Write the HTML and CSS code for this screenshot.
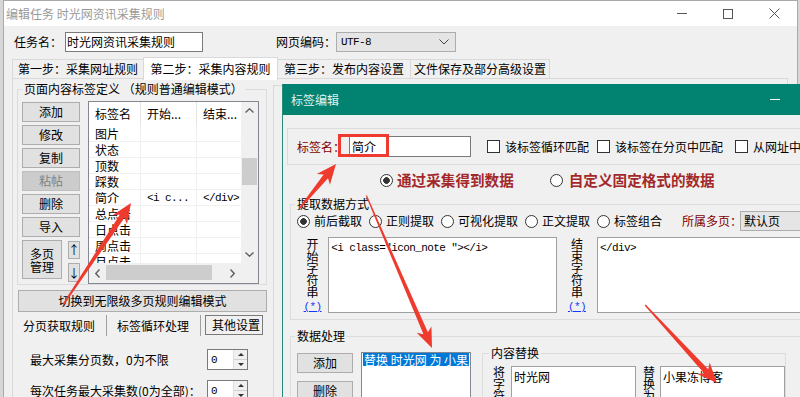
FILE: index.html
```html
<!DOCTYPE html>
<html lang="zh-CN">
<head>
    <meta charset="UTF-8">
    <meta name="viewport" content="width=device-width, initial-scale=1.0">
    <title>编辑任务 时光网资讯采集规则</title>
    <link rel="stylesheet" href="styles.css">
</head>
<body>
    <!-- Main window -->
    <div class="main-win">
        <div class="titlebar">
            <span class="title">编辑任务 时光网资讯采集规则</span>
            <div class="win-ctrls">
                <span class="wc"><i class="ic-min"></i></span>
                <span class="wc"><i class="ic-max"></i></span>
                <span class="wc"><svg width="11" height="11" viewBox="0 0 11 11"><path d="M0.5 0.5L10.5 10.5M10.5 0.5L0.5 10.5" stroke="#555" stroke-width="1"/></svg></span>
            </div>
        </div>

        <div class="task-row">
            <span class="task-lbl">任务名：</span>
            <div class="txt-input task-name">时光网资讯采集规则</div>
            <span class="enc-lbl">网页编码：</span>
            <div class="combo enc">
                <span class="mono">UTF-8</span>
                <svg class="chev" width="10" height="6" viewBox="0 0 10 6"><polyline points="0.5,0.5 5,5 9.5,0.5" fill="none" stroke="#444"/></svg>
            </div>
        </div>

        <div class="tabs">
            <div class="tab t1">第一步：采集网址规则</div>
            <div class="tab t2 on">第二步：采集内容规则</div>
            <div class="tab t3">第三步：发布内容设置</div>
            <div class="tab t4">文件保存及部分高级设置</div>
        </div>

        <div class="tab-panel">
            <div class="left-pane">
                <fieldset class="group tag-def">
                    <legend>页面内容标签定义 （规则普通编辑模式）</legend>
                    <div class="tag-def-body">
                        <div class="btn-col">
                            <button class="btn">添加</button>
                            <button class="btn">修改</button>
                            <button class="btn">复制</button>
                            <button class="btn" disabled>粘帖</button>
                            <button class="btn">删除</button>
                            <button class="btn">导入</button>
                            <div class="multi-row">
                                <button class="btn multi">多页<br>管理</button>
                                <div class="updown">
                                    <button class="btn up">↑</button>
                                    <button class="btn down">↓</button>
                                </div>
                            </div>
                        </div>

                        <div class="listview">
                            <div class="lv-main">
                                <div class="lv-content">
                                    <div class="lv-head"><span class="c1">标签名</span><span class="c2">开始...</span><span class="c3">结束...</span></div>
                                    <div class="lv-row"><span class="c1">图片</span><span class="c2"></span><span class="c3"></span></div>
                                    <div class="lv-row"><span class="c1">状态</span><span class="c2"></span><span class="c3"></span></div>
                                    <div class="lv-row"><span class="c1">顶数</span><span class="c2"></span><span class="c3"></span></div>
                                    <div class="lv-row"><span class="c1">踩数</span><span class="c2"></span><span class="c3"></span></div>
                                    <div class="lv-row"><span class="c1">简介</span><span class="c2 mono">&lt;i c...</span><span class="c3 mono">&lt;/div&gt;</span></div>
                                    <div class="lv-row"><span class="c1">总点击</span><span class="c2"></span><span class="c3"></span></div>
                                    <div class="lv-row"><span class="c1">日点击</span><span class="c2"></span><span class="c3"></span></div>
                                    <div class="lv-row"><span class="c1">周点击</span><span class="c2"></span><span class="c3"></span></div>
                                    <div class="lv-row"><span class="c1">月点击</span><span class="c2"></span><span class="c3"></span></div>
                                </div>
                                <div class="vscroll">
                                    <span class="sb-btn"><svg width="9" height="5" viewBox="0 0 9 5"><polyline points="0.5,4.5 4.5,0.8 8.5,4.5" fill="none" stroke="#606060" stroke-width="1.4"/></svg></span>
                                    <span class="sb-track"><i class="thumb-v"></i></span>
                                    <span class="sb-btn"><svg width="9" height="5" viewBox="0 0 9 5"><polyline points="0.5,0.5 4.5,4.2 8.5,0.5" fill="none" stroke="#606060" stroke-width="1.4"/></svg></span>
                                </div>
                            </div>
                            <div class="hscroll-row">
                                <div class="hscroll">
                                    <span class="sb-btn h"><svg width="5" height="9" viewBox="0 0 5 9"><polyline points="4.5,0.5 0.8,4.5 4.5,8.5" fill="none" stroke="#606060" stroke-width="1.4"/></svg></span>
                                    <span class="sb-track h"><i class="thumb-h"></i></span>
                                    <span class="sb-btn h"><svg width="5" height="9" viewBox="0 0 5 9"><polyline points="0.5,0.5 4.2,4.5 0.5,8.5" fill="none" stroke="#606060" stroke-width="1.4"/></svg></span>
                                </div>
                                <div class="corner"></div>
                            </div>
                        </div>
                    </div>
                </fieldset>

                <button class="btn switch-btn">切换到无限级多页规则编辑模式</button>

                <div class="subtabs">
                    <div class="subtab st1">分页获取规则</div>
                    <div class="subtab st2">标签循环处理</div>
                    <div class="subtab st3 on">其他设置</div>
                </div>

                <div class="opt-row">
                    <span class="opt-lbl">最大采集分页数，0为不限</span>
                    <div class="spin"><span class="mono val">0</span><div class="spin-btns"><i class="up"></i><i class="dn"></i></div></div>
                </div>
                <div class="opt-row second">
                    <span class="opt-lbl">每次任务最大采集数(0为全部)：</span>
                    <div class="spin"><span class="mono val">0</span><div class="spin-btns"><i class="up"></i><i class="dn"></i></div></div>
                </div>
            </div>
            <div class="right-pane"></div>
        </div>
    </div>

    <!-- Tag edit dialog, on top of the main window -->
    <div class="dlg">
        <div class="dlg-title">
            <span>标签编辑</span>
            <div class="win-ctrls">
                <span class="wc"><i class="ic-min light"></i></span>
                <span class="wc"><i class="ic-max light"></i></span>
                <span class="wc"></span>
            </div>
        </div>
        <div class="dlg-body">
            <div class="name-box">
                <span class="red-lbl name-lbl">标签名：</span>
                <div class="name-field">
                    <div class="txt-input name-input">简介</div>
                    <span class="mark-box"></span>
                </div>
                <span class="chk c-loop"><i class="cb"></i>该标签循环匹配</span>
                <span class="chk c-page"><i class="cb"></i>该标签在分页中匹配</span>
                <span class="chk c-url"><i class="cb"></i>从网址中获取</span>
            </div>

            <div class="source-row">
                <span class="src"><i class="radio on"></i><b>通过采集得到数据</b></span>
                <span class="src custom"><i class="radio"></i><b>自定义固定格式的数据</b></span>
            </div>

            <fieldset class="group extract">
                <legend>提取数据方式</legend>
                <div class="method-row">
                    <span class="rb"><i class="radio on"></i>前后截取</span>
                    <span class="rb"><i class="radio"></i>正则提取</span>
                    <span class="rb"><i class="radio"></i>可视化提取</span>
                    <span class="rb"><i class="radio"></i>正文提取</span>
                    <span class="rb"><i class="radio"></i>标签组合</span>
                    <span class="red-lbl page-lbl">所属多页：</span>
                    <div class="combo page-sel">默认页</div>
                </div>
                <div class="str-row">
                    <div class="vlabel first"><span class="vtext">开始字符串</span><a class="star mono">(*)</a></div>
                    <div class="txt-area start mono">&lt;i class="icon_note "&gt;&lt;/i&gt;</div>
                    <div class="vlabel second"><span class="vtext">结束字符串</span><a class="star mono">(*)</a></div>
                    <div class="txt-area end mono">&lt;/div&gt;</div>
                </div>
            </fieldset>

            <fieldset class="group process">
                <legend>数据处理</legend>
                <div class="process-row">
                    <div class="proc-btns">
                        <button class="btn">添加</button>
                        <button class="btn">删除</button>
                    </div>
                    <div class="proc-list"><div class="sel-item">替换 时光网 为 小果冻博客</div></div>
                    <fieldset class="group replace">
                        <legend>内容替换</legend>
                        <div class="replace-row">
                            <span class="vtext from-lbl">将字符串</span>
                            <div class="txt-area r-from">时光网</div>
                            <span class="vtext to-lbl">替换为</span>
                            <div class="txt-area r-to">小果冻博客</div>
                        </div>
                    </fieldset>
                </div>
            </fieldset>
        </div>
    </div>

    <!-- annotation arrows -->
    <svg class="arrows" width="800" height="397" viewBox="0 0 800 397">
        <g fill="#ef3a2e">
            <polygon transform="translate(131 203) rotate(-56.3)" points="0,0 -20,-8.5 -16,-2.8 -122,-0.8 -122,0.8 -16,2.8 -20,8.5"/>
            <polygon transform="translate(336 164) rotate(-50.7)" points="0,0 -20,-8.5 -16,-2.8 -57,-0.8 -57,0.8 -16,2.8 -20,8.5"/>
            <polygon transform="translate(432 348) rotate(66.7)" points="0,0 -20,-8 -16,-2.4 -166,-0.6 -166,0.6 -16,2.4 -20,8"/>
            <polygon transform="translate(717 383) rotate(47.3)" points="0,0 -20,-8.5 -16,-2.8 -106,-0.7 -106,0.7 -16,2.8 -20,8.5"/>
        </g>
    </svg>
</body>
</html>
```

FILE: styles.css
```css
* {
    box-sizing: border-box;
}

body {
    margin: 0;
    width: 800px;
    height: 397px;
    overflow: hidden;
    position: relative;
    background: #d6d6d6;
    font-family: "Noto Sans CJK SC", sans-serif;
    font-size: 12px;
    line-height: 14px;
    color: #000;
}

.mono {
    font-family: "Liberation Mono", monospace;
    font-size: 11px;
    letter-spacing: -0.6px;
}

button {
    font: inherit;
    color: inherit;
    margin: 0;
    padding: 0;
}

.btn {
    display: flex;
    align-items: center;
    justify-content: center;
    background: #e1e1e1;
    border: 1px solid #adadad;
}

.btn:disabled {
    background: #cccccc;
    border-color: #bfbfbf;
    color: #808080;
}

.group {
    margin: 0;
    min-width: 0;
    border: 1px solid #dcdcdc;
}

.group legend {
    padding: 0 2px;
    line-height: 14px;
}

.txt-input {
    display: flex;
    align-items: center;
    background: #fff;
    border: 1px solid #7a7a7a;
    padding: 0 1px;
    white-space: nowrap;
}

.combo {
    display: flex;
    align-items: center;
    background: #e5e5e5;
    border: 1px solid #adadad;
    padding-left: 4px;
}

.red-lbl {
    color: #800000;
}

/* ---------- main window ---------- */
.main-win {
    margin-left: 3px;
    width: 795px;
    height: 397px;
    background: #f0f0f0;
    border: 1px solid #aaaaaa;
    border-bottom: none;
}

.titlebar {
    height: 25px;
    display: flex;
    align-items: center;
    background: #fff;
}

.titlebar .title {
    padding-left: 2px;
    color: #9a9a9a;
}

.win-ctrls {
    display: flex;
    height: 100%;
    margin-left: auto;
}

.wc {
    width: 46px;
    display: flex;
    align-items: center;
    justify-content: center;
}

.ic-min {
    width: 10px;
    height: 1px;
    background: #555;
}

.ic-max {
    width: 10px;
    height: 10px;
    border: 1px solid #555;
}

.ic-min.light {
    background: #fff;
}

.ic-max.light {
    border-color: #fff;
}

.task-row {
    display: flex;
    align-items: center;
    height: 20px;
    margin-top: 6px;
    padding-left: 10px;
}

.task-lbl {
    width: 51px;
}

.task-name {
    width: 138px;
    height: 20px;
}

.enc-lbl {
    margin-left: 73px;
    width: 60px;
}

.enc {
    width: 120px;
    height: 20px;
}

.enc .chev {
    margin-left: auto;
    margin-right: 6px;
}

.tabs {
    display: flex;
    align-items: flex-end;
    height: 21px;
    margin: 5px 0 0 8px;
    position: relative;
    z-index: 1;
}

.tab {
    height: 19px;
    display: flex;
    align-items: center;
    justify-content: center;
    background: #f0f0f0;
    border: 1px solid #d9d9d9;
    border-bottom: none;
    margin-right: -1px;
}

.tab.on {
    height: 23px;
    margin-bottom: -2px;
    background: #fff;
}

.t1 { width: 132px; }
.t2 { width: 135px; }
.t3 { width: 134px; }
.t4 { width: 140px; }

.tab-panel {
    display: flex;
    height: 330px;
    margin: 0 9px 0 8px;
    padding: 3px 0 0 4px;
    border: 1px solid #d9d9d9;
}

.left-pane {
    width: 250px;
}

.right-pane {
    margin: 3px 0 0 6px;
    flex: 1;
    border-left: 1px solid #d9d9d9;
    border-top: 1px solid #d9d9d9;
}

.tag-def {
    padding: 6px 4px 0;
}

.tag-def-body {
    display: flex;
    align-items: flex-start;
}

.btn-col {
    width: 58px;
}

.btn-col > .btn {
    width: 58px;
    height: 20px;
    margin-bottom: 3px;
}

.multi-row {
    display: flex;
    margin-top: 1px;
}

.multi {
    width: 40px;
    height: 39px;
    line-height: 13px;
}

.updown {
    display: flex;
    flex-direction: column;
    margin-left: 6px;
}

.updown .btn {
    width: 12px;
}

.updown .up {
    height: 18px;
    margin-top: 1px;
}

.updown .down {
    height: 19px;
    margin-top: 4px;
}

.listview {
    width: 171px;
    height: 183px;
    margin: -1px 0 0 8px;
    border: 1px solid #828790;
    background: #fff;
    display: flex;
    flex-direction: column;
}

.lv-main {
    display: flex;
    flex: 1;
    min-height: 0;
}

.lv-content {
    flex: 1;
    overflow: hidden;
}

.lv-head,
.lv-row {
    display: flex;
    white-space: nowrap;
}

.lv-head {
    height: 24px;
}

.lv-row {
    height: 16px;
}

.lv-head span,
.lv-row span {
    display: flex;
    align-items: center;
    flex: none;
    padding-left: 6px;
    border-right: 1px solid #e5e5e5;
    overflow: hidden;
}

.lv-row span {
    border-right-color: #f0f0f0;
    border-bottom: 1px solid #f0f0f0;
}

.c1 { width: 52px; }
.c2 { width: 56px; }
.c3 { width: 60px; }

.vscroll {
    width: 17px;
    display: flex;
    flex-direction: column;
    background: #f0f0f0;
}

.sb-btn {
    height: 17px;
    display: flex;
    align-items: center;
    justify-content: center;
    flex: none;
}

.sb-track {
    flex: 1;
}

.thumb-v {
    display: block;
    width: 15px;
    height: 27px;
    margin: 39px 0 0 1px;
    background: #cdcdcd;
}

.hscroll-row {
    display: flex;
    height: 20px;
}

.hscroll {
    flex: 1;
    display: flex;
    background: #f0f0f0;
}

.sb-btn.h {
    width: 17px;
    height: 100%;
}

.thumb-h {
    display: block;
    width: 106px;
    height: 15px;
    margin: 2px 0 0 0;
    background: #cdcdcd;
}

.corner {
    width: 17px;
    background: #f0f0f0;
}

.switch-btn {
    width: 249px;
    height: 22px;
    margin: 5px 0 0 1px;
}

.subtabs {
    display: flex;
    height: 23px;
    margin-top: 1px;
}

.subtab {
    display: flex;
    align-items: center;
    height: 21px;
    margin-top: 2px;
    border-right: 1px solid #a0a0a0;
}

.st1 {
    width: 90px;
    padding-left: 6px;
}

.st2 {
    width: 94px;
    padding-left: 10px;
}

.st3.on {
    width: 58px;
    height: 20px;
    margin-left: 4px;
    padding-left: 6px;
    border: 1px solid #7a7a7a;
}

.opt-row {
    display: flex;
    align-items: center;
    height: 21px;
    margin-top: 13px;
    padding-left: 13px;
}

.opt-row.second {
    margin-top: 10px;
}

.opt-lbl {
    width: 177px;
    white-space: nowrap;
}

.spin {
    display: flex;
    width: 41px;
    height: 21px;
    background: #fff;
    border: 1px solid #7a7a7a;
}

.spin .val {
    flex: 1;
    padding: 3px 0 0 3px;
}

.spin-btns {
    width: 14px;
    display: flex;
    flex-direction: column;
    background: #f0f0f0;
    border-left: 1px solid #e0e0e0;
}

.spin-btns i {
    flex: 1;
    display: flex;
    align-items: center;
    justify-content: center;
}

.spin-btns .up {
    border-bottom: 1px solid #d0d0d0;
}

.spin-btns .up::after {
    content: "";
    border: 3px solid transparent;
    border-top: 0;
    border-bottom: 3px solid #333;
}

.spin-btns .dn::after {
    content: "";
    border: 3px solid transparent;
    border-bottom: 0;
    border-top: 3px solid #333;
}

/* ---------- tag edit dialog ---------- */
.dlg {
    position: absolute;
    left: 282px;
    top: 84px;
    width: 608px;
    height: 320px;
    background: #f0f0f0;
    border-left: 1px solid #2a8a7c;
}

.dlg-title {
    height: 31px;
    display: flex;
    align-items: center;
    padding-left: 8px;
    background: #028270;
    color: #e4f1ee;
}

.dlg-body {
    padding: 13px 0 0 4px;
}

.name-box {
    display: flex;
    align-items: center;
    height: 37px;
    padding-left: 9px;
    border: 1px solid #dcdcdc;
    white-space: nowrap;
}

.name-lbl {
    width: 52px;
}

.name-field {
    position: relative;
}

.name-input {
    width: 122px;
    height: 21px;
    padding-left: 2px;
}

.mark-box {
    position: absolute;
    left: -11px;
    top: -2px;
    width: 51px;
    height: 23px;
    border: 3px solid #ee3a2f;
}

.chk {
    display: flex;
    align-items: center;
}

.cb {
    width: 13px;
    height: 13px;
    margin-right: 5px;
    background: #fff;
    border: 1px solid #333;
}

.c-loop { margin-left: 16px; }
.c-page { margin-left: 8px; }
.c-url { margin-left: 12px; }

.radio {
    display: inline-block;
    flex: none;
    width: 13px;
    height: 13px;
    border: 1px solid #333;
    border-radius: 50%;
    background: #fff;
}

.radio.on {
    background: radial-gradient(circle, #333 0 3px, #fff 3.6px);
}

.source-row {
    display: flex;
    align-items: center;
    height: 20px;
    margin: 5px 0 7px;
    padding-left: 93px;
}

.src {
    display: flex;
    align-items: center;
    gap: 4px;
}

.src b {
    font-size: 14.6px;
    font-weight: bold;
    color: #a3282a;
}

.src.custom {
    margin-left: 36px;
    gap: 6px;
}

.extract {
    margin-left: 3px;
    padding: 0 0 6px 6px;
}

.extract legend,
.process legend {
    margin-left: -2px;
}

.method-row {
    display: flex;
    align-items: center;
    gap: 7px;
    height: 20px;
    white-space: nowrap;
}

.rb {
    display: flex;
    align-items: center;
    gap: 4px;
}

.page-lbl {
    margin-left: 13px;
    width: 58px;
}

.page-sel {
    width: 100px;
    height: 20px;
    margin-left: -7px;
    padding-left: 3px;
}

.str-row {
    display: flex;
    margin-top: 6px;
}

.vlabel {
    display: flex;
    flex-direction: column;
    align-items: center;
    padding-top: 1px;
}

.vlabel.first {
    width: 32px;
}

.vlabel.second {
    width: 41px;
}

.vtext {
    width: 12px;
    line-height: 12px;
    word-break: break-all;
}

.star {
    margin-top: 3px;
    line-height: 12px;
    color: #1437ff;
    text-decoration: underline;
}

.txt-area {
    background: #fff;
    border: 1px solid #a0a0a0;
    padding: 3px 2px;
    white-space: nowrap;
    overflow: hidden;
}

.txt-area.start {
    width: 235px;
    height: 76px;
}

.txt-area.end {
    width: 300px;
    height: 76px;
}

.process {
    margin: 9px 0 0 3px;
    padding: 0 0 0 6px;
    height: 80px;
}

.process-row {
    display: flex;
    align-items: flex-start;
}

.proc-btns {
    margin-top: 10px;
}

.proc-btns .btn {
    width: 56px;
    height: 20px;
    margin-bottom: 8px;
}

.proc-list {
    width: 110px;
    height: 60px;
    margin: 9px 0 0 8px;
    padding: 0 1px;
    background: #fff;
    border: 1px solid #828790;
    overflow: hidden;
}

.sel-item {
    height: 13px;
    line-height: 13px;
    padding-left: 1px;
    white-space: nowrap;
    background: #0078d7;
    color: #fff;
}

.replace {
    margin: 3px 0 0 11px;
    padding: 6px 0 0 8px;
    height: 60px;
}

.replace-row {
    display: flex;
    align-items: flex-start;
}

.from-lbl {
    margin-left: 2px;
}

.r-from {
    width: 125px;
    height: 40px;
    margin-left: 6px;
}

.to-lbl {
    margin-left: 7px;
}

.r-to {
    width: 125px;
    height: 40px;
    margin-left: 5px;
}

/* ---------- annotation arrows ---------- */
.arrows {
    position: absolute;
    left: 0;
    top: 0;
    pointer-events: none;
}
```
